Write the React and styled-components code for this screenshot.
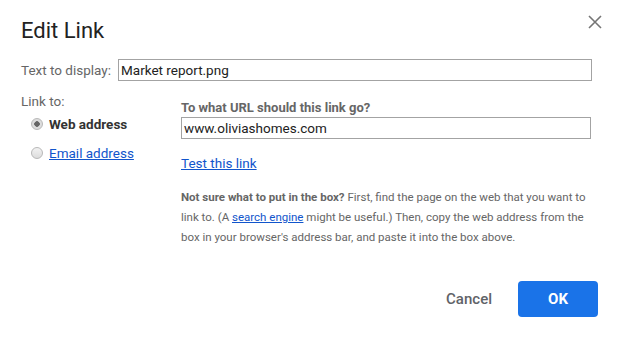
import React from "react";
import styled, { createGlobalStyle } from "styled-components";

const GlobalStyle = createGlobalStyle`
  body {
    margin: 0;
    background: #fff;
    font-family: Roboto, "Liberation Sans", Arial, sans-serif;
  }
`;

const EditLinkDialog = () => {
  return (
    <Dialog>
      <Header>
        <Title>Edit Link</Title>
        <CloseButton aria-label="Close">
          <svg width="14" height="14" viewBox="0 0 14 14">
            <path d="M1 1 L13 13 M13 1 L1 13" stroke="#757575" strokeWidth="1.6" />
          </svg>
        </CloseButton>
      </Header>

      <FieldRow>
        <FieldLabel>Text to display:</FieldLabel>
        <TextInput grow defaultValue="Market report.png" />
      </FieldRow>

      <LinkSection>
        <LinkTypes>
          <FieldLabel>Link to:</FieldLabel>
          <RadioOption>
            <Radio checked />
            <OptionText>Web address</OptionText>
          </RadioOption>
          <RadioOption>
            <Radio />
            <Link href="#">Email address</Link>
          </RadioOption>
        </LinkTypes>

        <LinkDetails>
          <Question>To what URL should this link go?</Question>
          <TextInput defaultValue="www.oliviashomes.com" />
          <TestLink href="#">Test this link</TestLink>
          <Hint>
            <b>Not sure what to put in the box?</b> First, find the page on the web that you want to
            link to. (A <Link href="#">search engine</Link> might be useful.) Then, copy the web address from the
            box in your browser's address bar, and paste it into the box above.
          </Hint>
        </LinkDetails>
      </LinkSection>

      <Footer>
        <CancelButton>Cancel</CancelButton>
        <OkButton>OK</OkButton>
      </Footer>
    </Dialog>
  );
};

const Dialog = styled.div`
  width: 618px;
  height: 337px;
  box-sizing: border-box;
  padding: 16px 20px 0 21px;
  background: #fff;
  color: #666;
  font-size: 13.5px;
`;

const Header = styled.div`
  display: flex;
  justify-content: space-between;
  align-items: flex-start;
`;

const Title = styled.h1`
  margin: 0;
  font-size: 22px;
  font-weight: 400;
  line-height: 30px;
  color: #222;
`;

const CloseButton = styled.button`
  width: 24px;
  height: 24px;
  margin: -6px -9px 0 0;
  padding: 0;
  border: none;
  background: none;
  display: grid;
  place-items: center;
  cursor: pointer;
`;

const FieldRow = styled.div`
  display: flex;
  align-items: center;
  margin-top: 13px;
  padding-right: 6px;
`;

const FieldLabel = styled.div`
  width: 97px;
  flex-shrink: 0;
  font-size: 13.5px;
  line-height: 20px;
  color: #666;
`;

const TextInput = styled.input`
  flex: ${(p) => (p.grow ? "1" : "none")};
  width: 100%;
  height: 22px;
  box-sizing: border-box;
  margin: 0;
  padding: 0 2px;
  border: 1px solid #a3a3a3;
  font-family: Roboto, "Liberation Sans", Arial, sans-serif;
  font-size: 13.5px;
  color: #222;
  outline: none;
`;

const LinkSection = styled.div`
  display: flex;
  margin-top: 10px;
`;

const LinkTypes = styled.div`
  width: 160px;
  flex-shrink: 0;
  display: flex;
  flex-direction: column;
`;

const RadioOption = styled.label`
  display: flex;
  align-items: center;
  gap: 6px;
  margin-left: 10px;
  height: 20px;
  margin-top: 9px;
  &:first-of-type {
    margin-top: 3px;
  }
`;

const Radio = styled.span`
  width: 12px;
  height: 12px;
  box-sizing: border-box;
  border-radius: 50%;
  border: 1px solid #b8b8b8;
  background: ${(p) =>
    p.checked
      ? "radial-gradient(circle, #666 0 2.5px, #ddd 3px)"
      : "linear-gradient(#f2f2f2, #dcdcdc)"};
`;

const OptionText = styled.span`
  font-size: 13.5px;
  font-weight: 700;
  color: #333;
`;

const Link = styled.a`
  color: #15c;
  text-decoration: underline;
  font-size: 13.5px;
`;

const LinkDetails = styled.div`
  flex: 1;
  display: flex;
  flex-direction: column;
  align-items: flex-start;
  padding-right: 7px;
  padding-top: 8px;
`;

const Question = styled.div`
  font-size: 13px;
  font-weight: 700;
  color: #666;
  line-height: 18px;
`;

const TestLink = styled(Link)`
  margin-top: 15px;
  line-height: 18px;
`;

const Hint = styled.p`
  margin: 15px 0 0;
  font-size: 11.5px;
  line-height: 20px;
  color: #666;
  b {
    color: #666;
  }
  a {
    font-size: 11.5px;
  }
`;

const Footer = styled.div`
  display: flex;
  justify-content: flex-end;
  align-items: center;
  gap: 26px;
  margin-top: 34px;
`;

const CancelButton = styled.button`
  padding: 0;
  border: none;
  background: none;
  font-family: Roboto, "Liberation Sans", Arial, sans-serif;
  font-size: 15px;
  font-weight: 500;
  color: #5f6368;
  cursor: pointer;
`;

const OkButton = styled.button`
  width: 80px;
  height: 36px;
  border: none;
  border-radius: 4px;
  background: #1a73e8;
  color: #fff;
  font-family: Roboto, "Liberation Sans", Arial, sans-serif;
  font-size: 15px;
  font-weight: 700;
  cursor: pointer;
`;

const App = () => (
  <>
    <GlobalStyle />
    <EditLinkDialog />
  </>
);

export default App;
